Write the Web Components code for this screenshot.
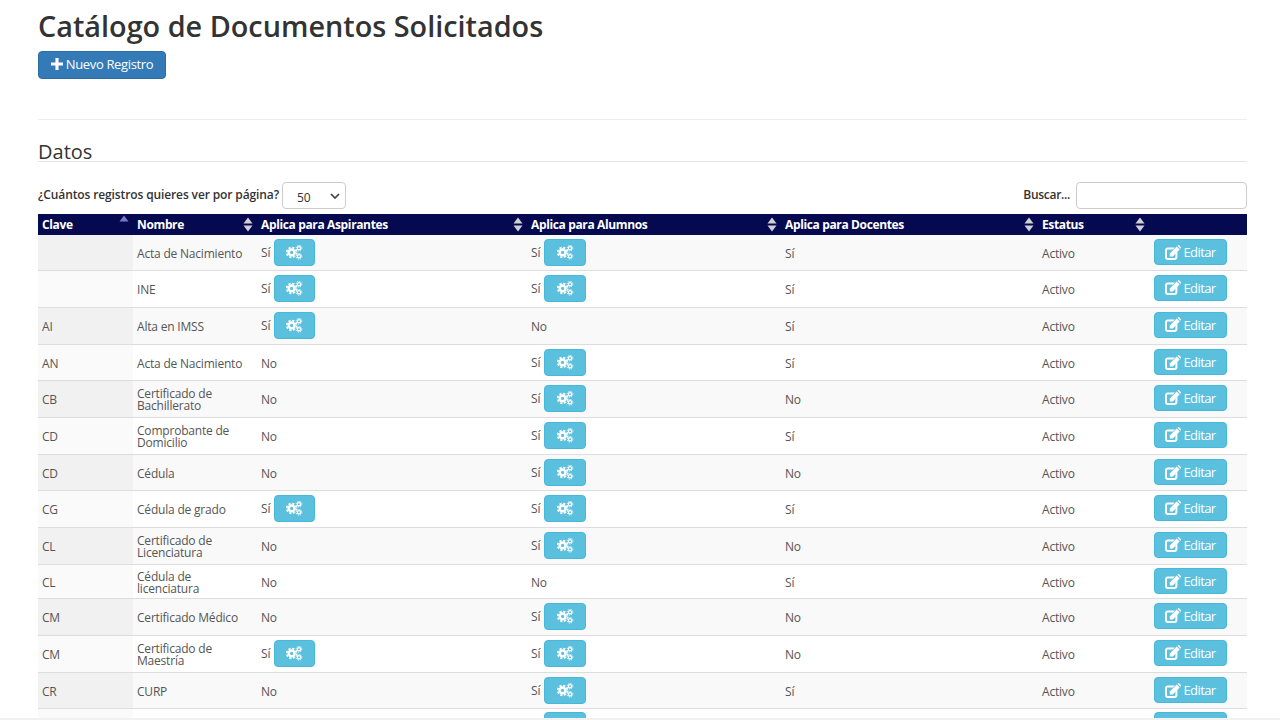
<!DOCTYPE html>
<html lang="es">
<head>
<meta charset="utf-8">
<title>Catálogo de Documentos Solicitados</title>
<style>
  html, body { margin: 0; height: 720px; overflow: hidden; background: #fff; }
  body { font-family: "Open Sans", "Noto Sans", sans-serif; color: #333; }
</style>
</head>
<body>
<catalog-page>
  <span slot="title">Catálogo de Documentos Solicitados</span>
  <span slot="section">Datos</span>
</catalog-page>

<script>
const ICONS = {
  plus: '<path d="M5.2 0h3.6v5.2H14v3.6H8.8V14H5.2V8.8H0V5.2h5.2z"/>',
  cogs: `<g fill="none" stroke="currentColor">
      <circle cx="5.6" cy="7.4" r="2.9" stroke-width="2.6"/>
      <circle cx="5.6" cy="7.4" r="4.9" stroke-width="1.7" stroke-dasharray="2.2 1.65"/>
      <circle cx="13" cy="3.2" r="1.6" stroke-width="1.2"/>
      <circle cx="13" cy="3.2" r="2.8" stroke-width="1" stroke-dasharray="1.2 1"/>
      <circle cx="13" cy="11.3" r="1.6" stroke-width="1.2"/>
      <circle cx="13" cy="11.3" r="2.8" stroke-width="1" stroke-dasharray="1.2 1"/>
    </g>`,
  edit: `<path d="M2.6 2.6h7.2L7.9 4.6H3c-.6 0-1 .4-1 1v6.4c0 .6.4 1 1 1h6.4c.6 0 1-.4 1-1V8.6l2-2v5.7c0 1.5-1.2 2.7-2.7 2.7H2.6C1.2 15 0 13.8 0 12.3V5.3C0 3.8 1.2 2.6 2.6 2.6z"/>
    <path d="M4.8 8.4 11.7 1.5l3 3-6.9 6.9h-3z"/><path d="M12.5.8l.4-.4c.4-.4 1-.4 1.4 0l1.5 1.5c.4.4.4 1 0 1.4l-.4.4z"/>`
};

class AppIcon extends HTMLElement {
  constructor() {
    super();
    const name = this.getAttribute('name');
    const w = this.getAttribute('w') || 14;
    const h = this.getAttribute('h') || 14;
    const box = this.getAttribute('box') || '0 0 14 14';
    this.attachShadow({mode: 'open'}).innerHTML = `
      <style>
        :host { display: inline-flex; line-height: 0; }
        svg { fill: currentColor; display: block; }
      </style>
      <svg width="${w}" height="${h}" viewBox="${box}">${ICONS[name]}</svg>`;
  }
}
customElements.define('app-icon', AppIcon);

class AppButton extends HTMLElement {
  constructor() {
    super();
    this.attachShadow({mode: 'open'}).innerHTML = `
      <style>
        :host {
          display: inline-flex; align-items: center; justify-content: center;
          box-sizing: border-box; border: 1px solid #46b8da; border-radius: 4px;
          background: #5bc0de; color: #fff; font-size: 12px;
        }
        :host([kind=primary]) { background: #337ab7; border-color: #2e6da4; }
      </style>
      <slot></slot>`;
  }
}
customElements.define('app-button', AppButton);

class SortArrows extends HTMLElement {
  constructor() {
    super();
    this.attachShadow({mode: 'open'}).innerHTML = `
      <style>
        :host { display: block; line-height: 0; }
      </style>
      <svg width="10" height="15" viewBox="0 0 10 15">
        <path d="M5 0.5 9.5 6.5H.5z" fill="${this.hasAttribute('asc') ? '#7a78c9' : '#d0d0d4'}"/>
        ${this.hasAttribute('asc') ? '' : '<path d="M.5 8.5h9L5 14.5z" fill="#d0d0d4"/>'}
      </svg>`;
  }
}
customElements.define('sort-arrows', SortArrows);

class ListToolbar extends HTMLElement {
  constructor() {
    super();
    this.attachShadow({mode: 'open'}).innerHTML = `
      <style>
        :host {
          display: flex; justify-content: space-between; align-items: center;
          font-size: 12px; font-weight: 600; color: #333; height: 27px;
        }
        .group { display: flex; align-items: center; gap: 3px; }
        .label { letter-spacing: -.12px; margin-top: -2px; }
        .label.short { letter-spacing: -.3px; }
        .fake-select {
          box-sizing: border-box; width: 64px; height: 27px; border: 1px solid #ccc; border-radius: 4px;
          display: flex; align-items: center; justify-content: space-between;
          padding: 3px 5px 0 14px; font-weight: 400; background: #fff;
        }
        .fake-select svg { margin-top: -3px; }
        .search { box-sizing: border-box; width: 171px; height: 27px; border: 1px solid #ccc; border-radius: 4px; margin-left: 3px; }
      </style>
      <div class="group"><span class="label">¿Cuántos registros quieres ver por página?</span>
        <div class="fake-select"><span>50</span>
          <svg width="10" height="6" viewBox="0 0 10 6"><path d="M1 1l4 4 4-4" fill="none" stroke="#444" stroke-width="1.7"/></svg>
        </div>
      </div>
      <div class="group"><span class="label short">Buscar...</span><div class="search"></div></div>`;
  }
}
customElements.define('list-toolbar', ListToolbar);

const ROWS = [
  ['', 'Acta de Nacimiento', 1, 1, 'Sí', 35],
  ['', 'INE', 1, 1, 'Sí', 37],
  ['AI', 'Alta en IMSS', 1, 0, 'Sí', 37],
  ['AN', 'Acta de Nacimiento', 0, 1, 'Sí', 36],
  ['CB', 'Certificado de Bachillerato', 0, 1, 'No', 37],
  ['CD', 'Comprobante de Domicilio', 0, 1, 'Sí', 37],
  ['CD', 'Cédula', 0, 1, 'No', 36],
  ['CG', 'Cédula de grado', 1, 1, 'Sí', 37],
  ['CL', 'Certificado de Licenciatura', 0, 1, 'No', 37],
  ['CL', 'Cédula de licenciatura', 0, 0, 'Sí', 34],
  ['CM', 'Certificado Médico', 0, 1, 'No', 37],
  ['CM', 'Certificado de Maestría', 1, 1, 'No', 37],
  ['CR', 'CURP', 0, 1, 'Sí', 36]
];

class DocTable extends HTMLElement {
  constructor() {
    super();
    const aplica = (on) => on
      ? `<div class="yes"><span>Sí</span><app-button class="cfg"><app-icon name="cogs" w="17" h="15" box="0 0 17 15"></app-icon></app-button></div>`
      : 'No';
    const rows = ROWS.map((r) => `
      <tr class="${r[5] === 37 ? '' : 'short'}" style="height:${r[5]}px">
        <td class="key">${r[0]}</td>
        <td class="name"><div>${r[1]}</div></td>
        <td>${aplica(r[2])}</td>
        <td>${aplica(r[3])}</td>
        <td>${r[4]}</td>
        <td>Activo</td>
        <td><app-button class="edit"><app-icon name="edit" w="16" h="15" box="0 0 16 15"></app-icon><span>Editar</span></app-button></td>
      </tr>`).join('');
    const head = ['Clave', 'Nombre', 'Aplica para Aspirantes', 'Aplica para Alumnos', 'Aplica para Docentes', 'Estatus', '']
      .map((t, i) => i === 6 ? '<th></th>' : `<th><div class="th"><span>${t}</span>${i === 0 ? '<sort-arrows asc></sort-arrows>' : '<sort-arrows></sort-arrows>'}</div></th>`)
      .join('');
    this.attachShadow({mode: 'open'}).innerHTML = `
      <style>
        :host { display: block; font-size: 12px; color: #555; }
        table { border-collapse: collapse; table-layout: fixed; width: 1209px; }
        th {
          background: #050a50; color: #fff; font-weight: 700; text-align: left;
          height: 21px; padding: 0 0 0 4px; box-sizing: border-box; letter-spacing: -.36px;
        }
        .th { display: flex; justify-content: space-between; align-items: center; padding-right: 4px; }
        th:nth-child(1) sort-arrows { align-self: flex-start; margin-top: -1px; }
        td {
          padding: 2px 4px 0; box-sizing: border-box; border-bottom: 1px solid #ddd;
          line-height: 12px; vertical-align: middle; background: #fff; letter-spacing: -.2px;
        }
        tr.short td { padding-top: 4px; }
        tr:nth-child(odd) td { background: #f9f9f9; }
        td.key { background: #fafafa; }
        tr:nth-child(odd) td.key { background: #f1f1f1; }
        .yes { display: flex; align-items: center; gap: 4px; }
        .yes span { margin-top: -2px; }
        .cfg { width: 42px; height: 27px; margin-top: -3px; }
        td:nth-child(3) .cfg { width: 41px; }
        .edit { width: 73px; height: 26px; gap: 2px; margin-left: 1px; margin-top: -4px; font-size: 13px; letter-spacing: -.6px; }
        .name div { width: 110px; }
        /* row cut by the bottom of the window: only the tops of the buttons show */
        .cut td { border-bottom: 0; }
        .cut .cfg { margin-left: 13px; }
      </style>
      <table>
        <colgroup>
          <col style="width:95px"><col style="width:124px"><col style="width:270px"><col style="width:254px">
          <col style="width:257px"><col style="width:111px"><col style="width:98px">
        </colgroup>
        <thead><tr>${head}</tr></thead>
        <tbody>${rows}
          <tr class="cut" style="height:37px">
            <td class="key"></td><td></td><td></td>
            <td><app-button class="cfg"></app-button></td>
            <td></td><td></td>
            <td><app-button class="edit"></app-button></td>
          </tr>
        </tbody>
      </table>`;
  }
}
customElements.define('doc-table', DocTable);

class CatalogPage extends HTMLElement {
  constructor() {
    super();
    this.attachShadow({mode: 'open'}).innerHTML = `
      <style>
        :host { display: block; box-sizing: border-box; padding: 8px 33px 0 38px; height: 720px; overflow: hidden; position: relative; }
        h1 { margin: 0; font-size: 28.8px; font-weight: 600; line-height: 36px; color: #333; }
        .new { width: 128px; height: 28px; margin-top: 7px; padding-bottom: 2px; gap: 3px; font-size: 13px; letter-spacing: -.36px; display: flex; }
        hr { border: 0; border-top: 1px solid #eee; margin: 40px 0 0; }
        h2 { margin: 18px 0 0; padding-top: 3px; box-sizing: border-box; font-size: 20px; font-weight: 400; line-height: 21px; color: #333; border-bottom: 1px solid #e5e5e5; height: 24px; }
        list-toolbar { margin-top: 20px; }
        doc-table { margin-top: 5px; }
        .fold { position: absolute; left: 0; right: 0; bottom: 0; height: 2px; background: #f1f1f1; }
      </style>
      <h1><slot name="title"></slot></h1>
      <app-button class="new" kind="primary"><app-icon name="plus" w="12" h="12"></app-icon><span>Nuevo Registro</span></app-button>
      <hr>
      <h2><slot name="section"></slot></h2>
      <list-toolbar></list-toolbar>
      <doc-table></doc-table>
      <div class="fold"></div>`;
  }
}
customElements.define('catalog-page', CatalogPage);
</script>
</body>
</html>
